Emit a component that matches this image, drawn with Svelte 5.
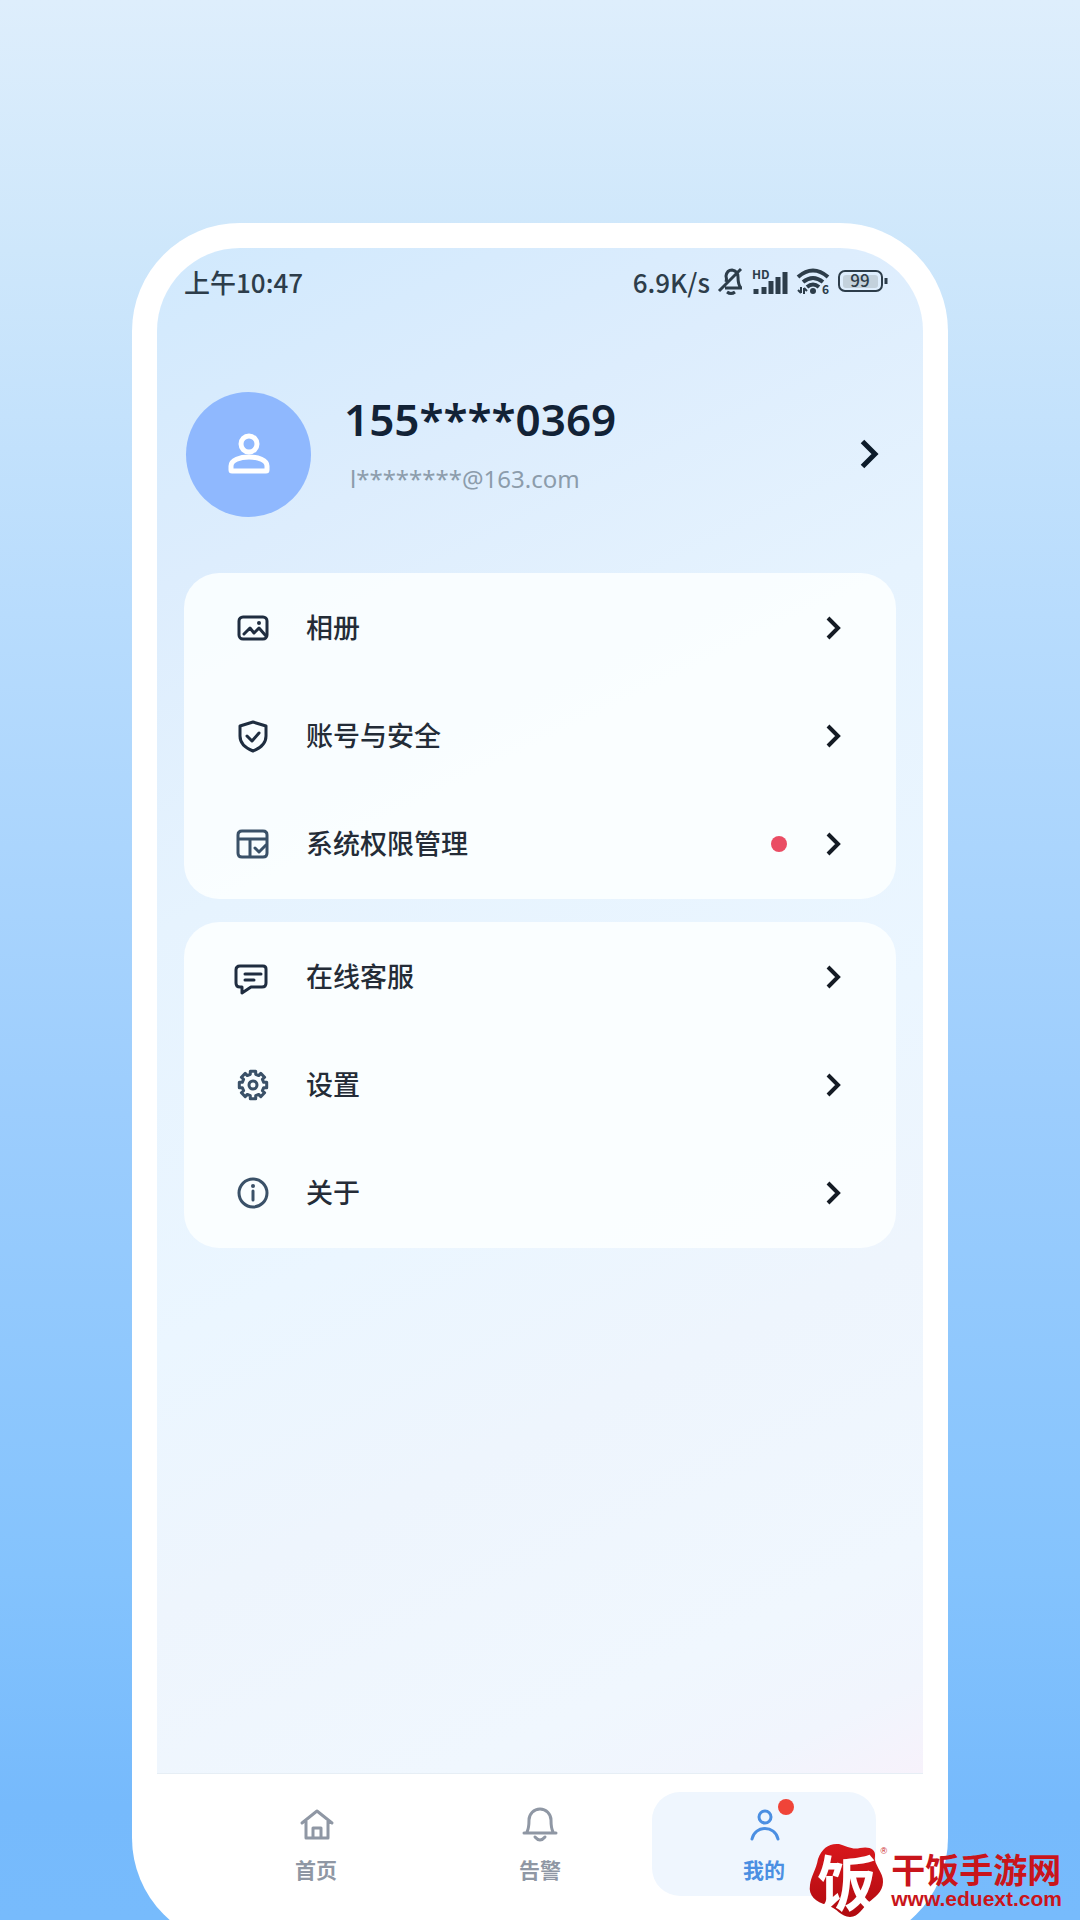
<script lang="ts">
  type Item = { icon: string; label: string; dot?: boolean };

  const groups: Item[][] = [
    [
      { icon: 'album', label: '相册' },
      { icon: 'shield', label: '账号与安全' },
      { icon: 'permission', label: '系统权限管理', dot: true },
    ],
    [
      { icon: 'chat', label: '在线客服' },
      { icon: 'gear', label: '设置' },
      { icon: 'info', label: '关于' },
    ],
  ];

  const tabs = [
    { icon: 'home', label: '首页' },
    { icon: 'bell', label: '告警' },
    { icon: 'user', label: '我的', dot: true },
  ];

  let active = $state('我的');

  // outline of an eight-toothed gear centred on 18,18
  function gearPath() {
    const points: string[] = [];
    for (let i = 0; i < 8; i++) {
      for (const [r, deg] of [[11, -14], [14, -11], [14, 11], [11, 14]]) {
        const a = ((i * 45 + deg) * Math.PI) / 180;
        points.push(`${(18 + r * Math.sin(a)).toFixed(1)} ${(18 - r * Math.cos(a)).toFixed(1)}`);
      }
    }
    return `M${points.join('L')}Z`;
  }
</script>

{#snippet chevron()}
  <svg class="chevron" viewBox="0 0 16 24" aria-hidden="true"><path d="M2 2l10 10L2 22" /></svg>
{/snippet}

<div class="page">
  <main class="phone">
    <div class="screen">
      <div class="status">
        <span>上午10:47</span>
        <div class="signals">
          <span>6.9K/s</span>
          <svg class="mute" viewBox="0 0 26 28" aria-hidden="true">
            <path d="M7 21H24M8 15Q9 12 8 9Q9 3 14 3Q20 4 20 10Q20 18 23 21M1 24L23 2" />
            <path d="M9 25Q13 28 17 25" />
          </svg>
          <svg class="cell" viewBox="0 0 36 25" aria-hidden="true">
            <text x="0" y="10">HD</text>
            <path d="M4 20v5M12 18v7M19 12v13M26 8v17M33 3v22" />
          </svg>
          <svg class="wifi" viewBox="0 0 34 26" aria-hidden="true">
            <path d="M2 9Q17 -4 32 9M7 14Q17 6 27 14M11 19Q17 14 23 19" />
            <circle cx="17" cy="23" r="3" />
            <path class="thin" d="M5 19v6M2 22l3 3M8 26v-6M11 23l-3 -3" />
            <text x="26" y="26">6</text>
          </svg>
          <svg class="battery" viewBox="0 0 50 24" aria-hidden="true">
            <rect class="fill" x="5" y="6" width="35" height="13" rx="3" />
            <rect class="case" x="1" y="2" width="43" height="20" rx="6" />
            <path d="M48 9v6" />
            <text x="22" y="18" text-anchor="middle">99</text>
          </svg>
        </div>
      </div>

      <button class="profile">
        <span class="avatar">
          <svg viewBox="0 0 42 42" aria-hidden="true">
            <circle cx="21" cy="11" r="8" />
            <path d="M3 37V33C3 21 39 21 39 33V37Q39 38 38 38H4Q3 38 3 37Z" />
          </svg>
        </span>
        <span class="who">
          <strong>155****0369</strong>
          <span>l********@163.com</span>
        </span>
        {@render chevron()}
      </button>

      {#each groups as items}
        <section class="card">
          {#each items as item}
            <button class="row">
              <svg class="icon {item.icon}" viewBox="0 0 36 36" aria-hidden="true">
                {#if item.icon === 'album'}
                  <rect x="4" y="7" width="28" height="22" rx="4" />
                  <path d="M9 24L15 18L19 23L24 18L31 26" />
                  <circle class="solid" cx="24" cy="13" r="2" />
                {:else if item.icon === 'shield'}
                  <path d="M18 4L31 8V18Q31 28 18 33Q5 28 5 18V8Z" />
                  <path d="M12 18L17 23L24 15" />
                {:else if item.icon === 'permission'}
                  <path d="M32 22V9Q32 5 28 5H7Q3 5 3 9V27Q3 31 7 31H28Q32 31 32 27V20M3 13H32M15 13V31" />
                  <path d="M20 22L24 26L31 19" />
                {:else if item.icon === 'chat'}
                  <path d="M5 7H28Q31 7 31 10V24Q31 28 27 28H16L7 34V28H5Q1 28 1 24V11Q1 7 5 7ZM10 15H26M10 21H19" />
                {:else if item.icon === 'gear'}
                  <path d={gearPath()} />
                  <circle cx="18" cy="18" r="4" />
                {:else}
                  <circle cx="18" cy="18" r="14" />
                  <path d="M18 16V25" />
                  <circle class="solid" cx="18" cy="11" r="2" />
                {/if}
              </svg>
              <span class="label">{item.label}</span>
              {#if item.dot}<i class="dot"></i>{/if}
              {@render chevron()}
            </button>
          {/each}
        </section>
      {/each}
    </div>

    <nav>
      {#each tabs as tab}
        <button class:active={active === tab.label} onclick={() => (active = tab.label)}>
          <span class="tab-icon">
            <svg viewBox="0 0 36 36" aria-hidden="true">
              {#if tab.icon === 'home'}
                <path d="M4 17L19 5L34 17M8 14V32H30V14M15 32V22H23V32" />
              {:else if tab.icon === 'bell'}
                <path d="M2 27H34M5 26Q7 22 7 14A11 11 0 0 1 29 14Q29 22 31 26M13 31Q18 37 23 31" />
              {:else}
                <circle cx="19" cy="11" r="6" />
                <path d="M6 33C9 19 29 19 32 33" />
              {/if}
            </svg>
            {#if tab.dot}<i class="badge"></i>{/if}
          </span>
          <span>{tab.label}</span>
        </button>
      {/each}
    </nav>
  </main>

  <a class="watermark" href="http://www.eduext.com">
    <span class="seal">
      <svg viewBox="0 0 78 76" aria-hidden="true">
        <defs>
          <linearGradient id="seal-red" x1="0" y1="0" x2="0" y2="1">
            <stop offset="0" stop-color="#d8181c" />
            <stop offset="1" stop-color="#b00a10" />
          </linearGradient>
        </defs>
        <path
          fill="url(#seal-red)"
          d="M9 17C13 6 20 1 30 2C38 4 43 8 51 6C60 4 67 7 66 14C64 22 75 31 74 40C74 50 65 56 60 60C53 66 50 75 41 75C32 75 28 66 18 63C7 60 -1 54 1 43C2 34 7 28 9 17Z"
        />
      </svg>
      <b>饭</b>
      <sup>®</sup>
    </span>
    <span class="site">
      <strong>干饭手游网</strong>
      <span>www.eduext.com</span>
    </span>
  </a>
</div>

<style>
  :global(body) {
    margin: 0;
  }
  .page {
    position: relative;
    box-sizing: border-box;
    display: flex;
    flex-direction: column;
    height: 100vh;
    min-height: 1600px;
    padding: 223px 132px 0;
    overflow: hidden;
    background: linear-gradient(#deeefc 0%, #cee7fb 13%, #b8dcfd 32%, #9ccdfd 58%, #84c3fd 82%, #76bafc 94%, #77bbfc 100%);
    font-family: 'Noto Sans', 'Noto Sans CJK SC', sans-serif;
  }
  svg {
    display: block;
    flex: none;
    overflow: visible;
    fill: none;
    stroke: currentColor;
  }
  button {
    border: 0;
    padding: 0;
    background: none;
    color: inherit;
    font: inherit;
    text-align: left;
    cursor: pointer;
  }
  .phone {
    box-sizing: border-box;
    display: flex;
    flex: 1;
    flex-direction: column;
    margin-bottom: -26px;
    padding: 25px 25px 0;
    border-radius: 108px;
    background: #fff;
  }
  .screen {
    flex: 1;
    padding: 0 27px;
    border-bottom: 1px solid #e6eef5;
    border-radius: 83px 83px 0 0;
    background: linear-gradient(154deg, #d1e9fd 0%, #ddedfd 18%, #e6f3fe 36%, #ebf6ff 58%, #eef5fd 72%, #f0f7fe 88%, #f1f5fd 95%, #f7f2fb 100%);
  }

  .status {
    display: flex;
    justify-content: space-between;
    align-items: center;
    height: 66px;
    padding-right: 8px;
    color: #2d3d4a;
    font: 500 26px 'Noto Sans CJK SC', sans-serif;
  }
  .signals {
    display: flex;
    align-items: center;
    gap: 8px;
  }
  .signals svg {
    stroke-width: 3;
  }
  .signals text {
    fill: currentColor;
    stroke: none;
    font: 700 12px 'Noto Sans CJK SC', sans-serif;
  }
  .mute {
    width: 26px;
    height: 28px;
  }
  .cell {
    width: 36px;
    height: 25px;
  }
  .cell path {
    stroke-width: 5;
  }
  .wifi {
    width: 34px;
    height: 26px;
  }
  .wifi path {
    stroke-width: 4;
  }
  .wifi circle {
    fill: currentColor;
    stroke: none;
  }
  .signals .thin {
    stroke-width: 2;
  }
  .battery {
    width: 50px;
    height: 24px;
  }
  .battery .fill {
    fill: #c3d1dc;
    stroke: none;
  }
  .battery .case {
    stroke-width: 2;
  }
  .signals .battery text {
    font-size: 17px;
    font-weight: 500;
  }

  .profile {
    display: flex;
    align-items: center;
    width: 100%;
    margin: 77px 0 56px;
    padding: 0 16px 0 2px;
    color: #0c1b2a;
  }
  .profile .chevron {
    width: 20px;
    height: 30px;
  }
  .avatar {
    display: grid;
    place-items: center;
    width: 125px;
    height: 125px;
    border-radius: 50%;
    background: #8fb8fe;
    color: #fff;
  }
  .avatar svg {
    width: 42px;
    height: 42px;
    stroke-width: 5;
  }
  .who {
    display: flex;
    flex: 1;
    flex-direction: column;
    gap: 16px;
    padding: 0 0 22px 33px;
  }
  .who strong {
    color: #122236;
    font-size: 44px;
    font-weight: 600;
    line-height: 56px;
  }
  .who span {
    padding-left: 6px;
    color: #8c9cab;
    font-size: 24px;
    line-height: 32px;
  }

  .card {
    margin-bottom: 23px;
    padding: 1px 0;
    border-radius: 35px;
    background: rgba(253, 255, 255, 0.85);
  }
  .row {
    display: flex;
    align-items: center;
    width: 100%;
    height: 108px;
    padding: 0 54px 0 51px;
    color: #141b24;
  }
  .icon {
    width: 36px;
    height: 36px;
    stroke-width: 3;
    stroke-linecap: round;
    stroke-linejoin: round;
    color: #1f2d40;
  }
  .permission,
  .gear,
  .info {
    color: #3a5168;
  }
  .solid {
    fill: currentColor;
    stroke: none;
  }
  .label {
    flex: 1;
    padding: 0 0 2px 35px;
    color: #242c37;
    font: 500 27px/40px 'Noto Sans CJK SC', sans-serif;
  }
  .dot {
    width: 16px;
    height: 16px;
    margin-right: 39px;
    border-radius: 50%;
    background: #ea4d64;
  }
  .chevron {
    width: 16px;
    height: 24px;
    stroke-width: 4;
  }

  nav {
    display: flex;
    box-sizing: border-box;
    height: 172px;
    padding: 18px 47px 50px;
    color: #8f97a4;
  }
  nav button {
    display: flex;
    flex: 1;
    flex-direction: column;
    align-items: center;
    gap: 12px;
    padding-top: 14px;
    border-radius: 28px;
    font: 700 21px/30px 'Noto Sans CJK SC', sans-serif;
  }
  nav button.active {
    background: #eff6fe;
    color: #4b8fe2;
  }
  .tab-icon {
    position: relative;
  }
  .tab-icon svg {
    width: 36px;
    height: 36px;
    stroke-width: 3;
    stroke-linecap: round;
    stroke-linejoin: round;
  }
  .badge {
    position: absolute;
    top: -7px;
    right: -12px;
    width: 16px;
    height: 16px;
    border-radius: 50%;
    background: #f04438;
  }

  .watermark {
    position: absolute;
    right: 18px;
    bottom: 2px;
    display: flex;
    align-items: center;
    gap: 4px;
    color: #c9151b;
    text-decoration: none;
  }
  .seal {
    position: relative;
    width: 78px;
    height: 76px;
  }
  .seal svg {
    width: 78px;
    height: 76px;
    stroke: none;
  }
  .seal b {
    position: absolute;
    top: 8px;
    left: 8px;
    color: #fff;
    font: 700 60px/60px 'Noto Sans CJK SC', sans-serif;
  }
  .seal sup {
    position: absolute;
    top: 3px;
    right: 0;
    font: 9px/12px 'Liberation Sans', sans-serif;
  }
  .site {
    display: flex;
    flex-direction: column;
    font: 700 21px/22px 'Liberation Sans', sans-serif;
  }
  .site strong {
    font: 700 34px/38px 'Noto Sans CJK SC', sans-serif;
  }
</style>
